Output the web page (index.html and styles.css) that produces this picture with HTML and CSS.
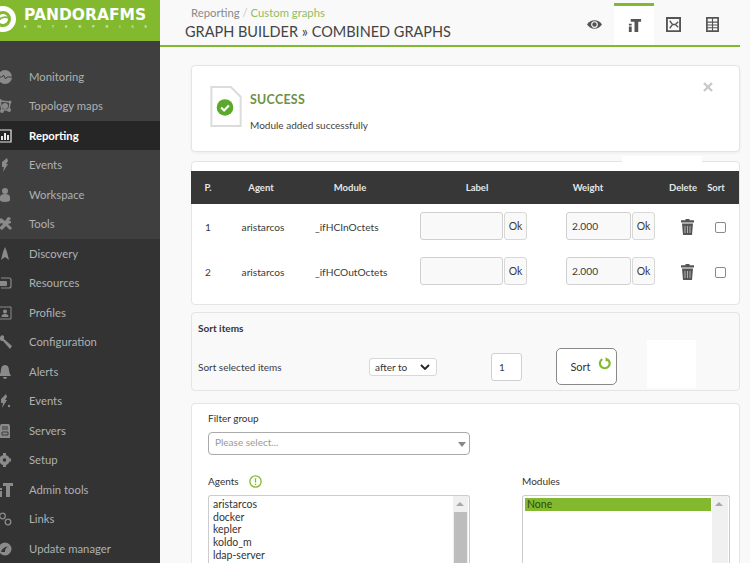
FILE: index.html
```html
<!DOCTYPE html>
<html lang="en">
<head>
<meta charset="utf-8">
<title>Graph builder</title>
<link rel="stylesheet" href="styles.css">
</head>
<body>
<div class="app">
  <aside class="sidebar">
    <div class="logo">
      <svg class="logo-mark" viewBox="0 0 26 26"><circle cx="13" cy="13" r="10.500" fill="none" stroke="#fff" stroke-width="5"/><circle cx="13" cy="13" r="5" fill="#fff"/><path d="M7 17c3-6 8-7 12-5" fill="none" stroke="#82b92e" stroke-width="1.800"/></svg>
      <div class="logo-text"><div class="logo-name">PANDORAFMS</div><div class="logo-sub">ENTERPRISE</div></div>
    </div>
    <nav class="nav">
      <div class="nav-top">
        <a class="item"><svg class="ico" viewBox="0 0 14 14"><circle cx="6" cy="7" r="7"/><path d="M-1 7h4l1.500-2 2 4 1.500-2h5" fill="none" stroke="#3f3f3f"/></svg>Monitoring</a>
        <a class="item"><svg class="ico" viewBox="0 0 14 14"><path d="M1 2l10 1-1 8-7 0z" fill="none" stroke="#8a8a8a" stroke-width="1.500"/><circle cx="1" cy="2" r="2"/><circle cx="11" cy="3" r="1.500"/><circle cx="3" cy="12" r="2"/><circle cx="10" cy="11" r="2"/><circle cx="6" cy="7" r="3"/></svg>Topology maps</a>
        <a class="item active"><svg class="ico" viewBox="0 0 14 14"><path d="M0 1h12v12H0z" fill="none" stroke="#e8e8e8" stroke-width="1.200"/><path d="M2 11V7h2v4zM5 11V4h2v7zM8 11V6h2v5z" fill="#e8e8e8"/></svg>Reporting</a>
        <a class="item"><svg class="ico" viewBox="0 0 14 14"><path d="M8 0L3 4v5h2l-1 5 5-8H7l2-3z"/></svg>Events</a>
        <a class="item"><svg class="ico" viewBox="0 0 14 14"><circle cx="6" cy="3" r="3"/><path d="M1 12V9c0-2 2-3 5-3s5 1 5 3v3c0 1-2 2-5 2s-5-1-5-2z"/></svg>Workspace</a>
        <a class="item"><svg class="ico" viewBox="0 0 14 14"><path d="M0 3l2-2 4 3 3-4 3 1-2 3 2 0 0 2-3 1 4 4-2 2-4-4-4 4-3-2 4-4-1-1-3 1z"/></svg>Tools</a>
      </div>
      <div class="nav-bottom">
        <a class="item"><svg class="ico" viewBox="0 0 14 14"><path d="M6 0l2 5 2 8-4-3-4 3 2-8z"/></svg>Discovery</a>
        <a class="item"><svg class="ico" viewBox="0 0 14 14"><path d="M2 2h8c2 0 2 1 2 2v6c0 1 0 2-2 2H2" fill="none" stroke="#8a8a8a" stroke-width="1.200"/><rect x="0" y="5" width="8" height="5" rx="1"/></svg>Resources</a>
        <a class="item"><svg class="ico" viewBox="0 0 14 14"><path d="M0 1h12v12H0z" fill="none" stroke="#8a8a8a"/><circle cx="6" cy="5.500" r="2"/><path d="M2.500 11c0-2 1-3 3.500-3s3.500 1 3.500 3z"/></svg>Profiles</a>
        <a class="item"><svg class="ico" viewBox="0 0 14 14"><path d="M0 3l3-3 2 1v3l8 7-2 3-7-8H2z"/></svg>Configuration</a>
        <a class="item"><svg class="ico" viewBox="0 0 14 14"><path d="M6 0c3 0 4 3 4 5s1 4 2 6H0c1-2 2-4 2-6s1-5 4-5zM4 12h4c0 1-1 2-2 2s-2-1-2-2z"/></svg>Alerts</a>
        <a class="item"><svg class="ico" viewBox="0 0 14 14"><path d="M7 0L2 5v4h2l-1 5 5-8H6l2-3z"/><circle cx="10" cy="12" r="1.200"/></svg>Events</a>
        <a class="item"><svg class="ico" viewBox="0 0 14 14"><path d="M2 0h8l1 2v12H1V2z"/><path d="M3 3h6M3 5h6M3 8h6v3H3z" fill="none" stroke="#3a3a3a"/></svg>Servers</a>
        <a class="item"><svg class="ico" viewBox="0 0 14 14"><circle cx="5.500" cy="7" r="3.500" fill="none" stroke="#8a8a8a" stroke-width="3.500"/><path d="M4 0h3v3H4zM4 11h3v3H4zM-1 5.500h3v3h-3zM9 5.500h3v3H9z"/></svg>Setup</a>
        <a class="item"><svg class="ico" viewBox="0 0 14 14"><path d="M4 0h10v3h-3v11H7V3H4zM0 5h3v2H0zM0 8h3v6H0z"/></svg>Admin tools</a>
        <a class="item"><svg class="ico" viewBox="0 0 14 14"><g fill="none" stroke="#8a8a8a" stroke-width="1.300"><circle cx="3.500" cy="4" r="2.800"/><circle cx="9" cy="10" r="2.800"/></g></svg>Links</a>
        <a class="item"><svg class="ico" viewBox="0 0 14 14"><circle cx="6" cy="7" r="6.500"/><path d="M2 10c1-4 5-6 8-5-3 0-4 2-4 5z" fill="#333"/></svg>Update manager</a>
      </div>
    </nav>
  </aside>

  <main class="main">
    <header class="topbar">
      <div class="titles">
        <div class="crumbs">Reporting <span class="sep">/</span> <span class="crumb-on">Custom graphs</span></div>
        <h1 class="title">GRAPH BUILDER » COMBINED GRAPHS</h1>
      </div>
      <div class="tabs">
        <div class="tab"><svg class="tab-ico" viewBox="0 0 16 16"><path d="M0 8c2-3 5-4.500 8-4.500S14 5 16 8c-2 3-5 4.500-8 4.500S2 11 0 8z" fill="#555"/><circle cx="8" cy="8" r="3" fill="none" stroke="#f9f9f9" stroke-width="1.200"/></svg></div>
        <div class="tab tab-on"><svg class="tab-ico" viewBox="0 0 16 16"><path d="M4 1h11v3h-3v11H8V4H4zM2 6h3v2H2zM2 9h3v6H2z" fill="#555"/></svg></div>
        <div class="tab"><svg class="tab-ico" viewBox="0 0 16 16"><path d="M1 1h14v14H1z" fill="none" stroke="#555" stroke-width="2"/><path d="M4 4l3 4-3 4M7 8h3l3-3M10 8l3 3" fill="none" stroke="#555" stroke-width="1.400"/></svg></div>
        <div class="tab"><svg class="tab-ico" viewBox="0 0 16 16"><path d="M2 1h12v14H2z" fill="none" stroke="#555" stroke-width="1.800"/><path d="M2 5.500h12M2 8.500h12M2 11.500h12M8 1v14" stroke="#555" stroke-width="1.200"/></svg></div>
      </div>
    </header>

    <div class="content">
      <section class="card success">
        <svg class="doc" viewBox="0 0 32 42"><path d="M1 1h20l10 10v30H1z" fill="#fff" stroke="#dcdcdc" stroke-width="2"/><circle cx="15" cy="22" r="8.500" fill="#5ba92c"/><path d="M11 22l3 3 5-5" fill="none" stroke="#fff" stroke-width="2.200"/></svg>
        <div class="msg">
          <div class="msg-title">SUCCESS</div>
          <div class="msg-text">Module added successfully</div>
        </div>
        <svg class="close" viewBox="0 0 10 10"><path d="M1 1l8 8M9 1l-8 8" stroke="#c9c9c9" stroke-width="2.400"/></svg>
      </section>

      <section class="card table-card">
        <table class="grid">
          <colgroup><col class="c1"><col class="c2"><col class="c3"><col class="c4"><col class="c5"><col class="c6"><col class="c7"></colgroup>
          <thead>
            <tr><th>P.</th><th>Agent</th><th>Module</th><th class="th-label">Label</th><th class="th-weight">Weight</th><th>Delete</th><th>Sort</th></tr>
          </thead>
          <tbody>
            <tr>
              <td>1</td><td class="agent">aristarcos</td><td class="left">_ifHCInOctets</td>
              <td class="inputs"><div class="pair"><span class="field wide"></span><span class="ok">Ok</span></div></td>
              <td class="inputs w"><div class="pair"><span class="field num">2.000</span><span class="ok">Ok</span></div></td>
              <td><svg class="trash" viewBox="0 0 13 16"><path d="M4.500 0h4v1.200H13v2.300H0V1.200h4.500zM1 4.500h11l-1 11.500H2z" fill="#555"/><path d="M4 7v7M6.500 7v7M9 7v7" stroke="#bbb" stroke-width=".9"/></svg></td>
              <td><span class="check"></span></td>
            </tr>
            <tr>
              <td>2</td><td class="agent">aristarcos</td><td class="left">_ifHCOutOctets</td>
              <td class="inputs"><div class="pair"><span class="field wide"></span><span class="ok">Ok</span></div></td>
              <td class="inputs w"><div class="pair"><span class="field num">2.000</span><span class="ok">Ok</span></div></td>
              <td><svg class="trash" viewBox="0 0 13 16"><path d="M4.500 0h4v1.200H13v2.300H0V1.200h4.500zM1 4.500h11l-1 11.500H2z" fill="#555"/><path d="M4 7v7M6.500 7v7M9 7v7" stroke="#bbb" stroke-width=".9"/></svg></td>
              <td><span class="check"></span></td>
            </tr>
          </tbody>
        </table>
      </section>

      <section class="card sort-card">
        <div class="sort-title">Sort items</div>
        <div class="sort-row">
          <span class="sort-label">Sort selected items</span>
          <span class="sel">after to<svg class="chev" viewBox="0 0 10 6"><path d="M1 1l4 4 4-4" fill="none" stroke="#222" stroke-width="1.800"/></svg></span>
          <span class="pos">1</span>
          <span class="sort-btn">Sort<svg class="refresh" viewBox="0 0 12 12"><path d="M4 2a4.500 4.500 0 1 0 4.500 0" fill="none" stroke="#82b92e" stroke-width="2"/><path d="M7 0v4h4z" fill="#82b92e"/></svg></span>
          <span class="blank"></span>
        </div>
      </section>

      <section class="card filter-card">
        <div class="f-col">
          <div class="f-label">Filter group</div>
          <div class="combo">Please select...<span class="caret"></span></div>
          <div class="f-label agents-label">Agents <svg class="info" viewBox="0 0 12 12"><circle cx="6" cy="6" r="5.200" fill="none" stroke="#82b92e" stroke-width="1.200"/><path d="M6 3v4M6 8v1.200" stroke="#82b92e" stroke-width="1.200"/></svg></div>
          <div class="listbox">
            <div class="opts"><div>aristarcos</div><div>docker</div><div>kepler</div><div>koldo_m</div><div>ldap-server</div></div>
            <div class="bar"><span class="arrow"></span><span class="thumb"></span></div>
          </div>
        </div>
        <div class="m-col">
          <div class="f-label">Modules</div>
          <div class="listbox mods">
            <div class="opts"><div class="picked">None</div></div>
            <div class="bar"><span class="arrow"></span></div>
          </div>
        </div>
      </section>
    </div>
  </main>
</div>
</body>
</html>
```

FILE: styles.css
```css
* { box-sizing: border-box; }
html, body { margin: 0; height: 563px; overflow: hidden; }
body { font-family: Lato, "Liberation Sans", sans-serif; font-size: 10px; color: #3a3a3a; background: #f9f9f9; }
.app { display: flex; width: 750px; height: 563px; overflow: hidden; }

.sidebar { flex: 0 0 160px; height: 563px; background: #333; overflow: hidden; }
.logo { height: 41px; background: #82b92e; display: flex; align-items: center; gap: 8px; }
.logo-mark { width: 26px; height: 26px; margin: -3px 0 0 -10px; flex: none; }
.logo-text { color: #fff; margin-bottom: 7px; }
.logo-name { font-family: "DejaVu Sans", sans-serif; font-weight: 700; font-size: 15.500px; line-height: 18px; white-space: nowrap; }
.logo-sub { font-size: 4.500px; line-height: 5px; letter-spacing: 10.800px; opacity: .85; white-space: nowrap; }
.nav { display: flex; flex-direction: column; }
.nav-top { background: #3f3f3f; padding-top: 20.500px; }
.item { display: flex; align-items: center; height: 29.500px; padding-left: 29px; font-size: 11.300px; color: #adb1b3; position: relative; white-space: nowrap; }
.item.active { background: #262626; color: #fff; font-weight: 700; }
.ico { position: absolute; left: -1px; top: 8px; width: 14px; height: 14px; fill: #8a8a8a; overflow: visible; }

.main { flex: 1; min-width: 0; padding-right: 10px; }
.topbar { height: 47px; display: flex; justify-content: space-between; border-bottom: 2px solid #82b92e; padding-left: 25px; background: #f9f9f9; }
.crumbs { font-size: 11.300px; color: #8a8a8a; line-height: 14px; margin: 6px 0 0 6px; }
.sep { color: #c8c8c8; }
.crumb-on { color: #93bc60; }
.title { margin: 3px 0 0; font-size: 14.500px; line-height: 17px; font-weight: 400; color: #444; white-space: nowrap; }
.tabs { display: flex; padding: 3px 8px 0 0; }
.tab { width: 39px; display: flex; align-items: center; justify-content: center; }
.tab-on { width: 40px; background: #fff; border-top: 3px solid #82b92e; }
.tab-ico { width: 15px; height: 15px; }

.content { padding: 18px 0 0 31px; display: flex; flex-direction: column; }
.card { background: #fff; border: 1px solid #e4e4e4; border-radius: 4px; position: relative; }
.success { height: 87px; display: flex; align-items: flex-start; padding: 20px 0 0 18px; box-shadow: 0 1px 3px rgba(0,0,0,.06); }
.doc { width: 32px; height: 41px; flex: none; }
.msg { margin-left: 8px; }
.msg-title { font-size: 12.400px; font-weight: 700; color: #6d9144; line-height: 15px; margin-top: 6px; letter-spacing: .3px; }
.msg-text { font-size: 10px; line-height: 13px; margin-top: 12px; color: #3f3f3f; }
.close { position: absolute; right: 26px; top: 16px; width: 10px; height: 10px; }

.table-card { margin-top: 9px; height: 144px; padding-top: 9px; }
.table-card::before { content: ""; position: absolute; left: 430px; top: -6px; width: 80px; height: 6px; background: #fff; }
.grid { width: 548px; margin-left: -1px; border-collapse: collapse; table-layout: fixed; }
.c1 { width: 34px; } .c2 { width: 72px; } .c3 { width: 106px; } .c4 { width: 148px; } .c5 { width: 118px; } .c6 { width: 27px; } .c7 { width: 43px; }
.grid th { height: 33px; padding: 0; background: #373737; color: #e4e7e8; font-size: 9.500px; font-weight: 700; text-align: center; }
.grid th:last-child { padding-right: 3px; }
.th-weight.th-weight { padding-right: 44px; }
.grid td { height: 45px; padding: 0; text-align: center; font-size: 10.200px; color: #3a3a3a; }
.grid td.agent { padding-left: 4px; }
.grid td.left { text-align: left; padding-left: 18px; }
.grid td.inputs { text-align: left; padding-left: 17px; }
.grid td.w { padding-left: 15px; }
.grid td:last-child { padding-left: 5px; }
.pair { display: flex; gap: 1px; margin-bottom: 2px; }
.field { height: 28px; background: #f9f9f9; border: 1px solid #d0d0d0; border-radius: 3px; display: flex; align-items: center; padding-left: 5px; }
.wide { width: 83px; }
.num { width: 65px; font-size: 10.200px; }
.ok { width: 23px; height: 28px; background: #f9f9f9; border: 1px solid #d8d8d8; border-radius: 3px; display: flex; align-items: center; justify-content: center; font-size: 10.500px; }
.trash { width: 13px; height: 16px; margin-left: 10px; vertical-align: middle; }
.check { display: inline-block; width: 11px; height: 11px; border: 1px solid #8a8a8a; border-radius: 2px; background: #fff; vertical-align: middle; }

.sort-card { margin-top: 7px; height: 79px; background: #f9f9f9; padding: 0 0 0 6px; }
.sort-title { font-size: 10px; font-weight: 700; color: #333; line-height: 13px; padding-top: 9px; }
.sort-row { display: grid; grid-template-columns: 171px 122px 65px 91px 49px; align-items: center; height: 48px; margin-top: 8px; }
.sel { width: 68px; height: 18px; background: #fff; border: 1px solid #d8d8d8; border-radius: 3px; display: flex; align-items: center; justify-content: space-between; padding: 0 6px 0 5px; color: #333; }
.chev { width: 10px; height: 6px; }
.pos { width: 31px; height: 28px; background: #fff; border: 1px solid #d0d0d0; border-radius: 3px; display: flex; align-items: center; padding-left: 7px; }
.sort-btn { width: 61px; height: 37px; margin-top: -2px; background: #fff; border: 1px solid #888; border-radius: 5px; display: flex; align-items: center; justify-content: center; gap: 7px; padding-left: 8px; font-size: 11px; color: #333; }
.refresh { width: 13px; height: 13px; margin-top: -6px; }
.blank { width: 49px; height: 48px; margin-top: -6px; background: #fff; }

.filter-card { margin-top: 12px; height: 200px; display: flex; padding: 8px 0 0 16px; }
.f-col { width: 262px; }
.m-col { width: 208px; margin-left: 52px; padding-top: 63px; }
.f-label { font-size: 10px; line-height: 13px; color: #333; }
.combo { position: relative; height: 23px; margin-top: 7px; border: 1px solid #aaa; border-radius: 4px; background: #fff; padding-left: 6px; line-height: 19px; color: #999; }
.caret { position: absolute; right: 3px; top: 9px; border: 4px solid transparent; border-top: 5px solid #888; border-bottom: 0; }
.agents-label { margin-top: 20px; display: flex; align-items: center; gap: 10px; }
.info { width: 13px; height: 13px; }
.listbox { margin-top: 7px; height: 90px; border: 1px solid #ccc; border-bottom: 0; border-radius: 3px 3px 0 0; display: flex; justify-content: space-between; background: #fff; overflow: hidden; }
.opts { flex: 1; padding: 2px 0 0 4px; font-size: 10.500px; line-height: 12.700px; color: #333; }
.bar { width: 15px; background: #f0f0f0; position: relative; margin-right: 1px; flex: none; }
.arrow { position: absolute; left: 3px; top: 6px; border: 4px solid transparent; border-bottom: 4px solid #a8a8a8; border-top: 0; }
.thumb { position: absolute; left: 1px; top: 16px; width: 13px; bottom: 0; background: #bdbdbd; }
.mods .opts { padding: 2px 1px 0 2px; }
.mods .bar { width: 16px; }
.picked { background: #82b92e; height: 13px; line-height: 13px; padding-left: 2px; color: #2f4a12; }
```
